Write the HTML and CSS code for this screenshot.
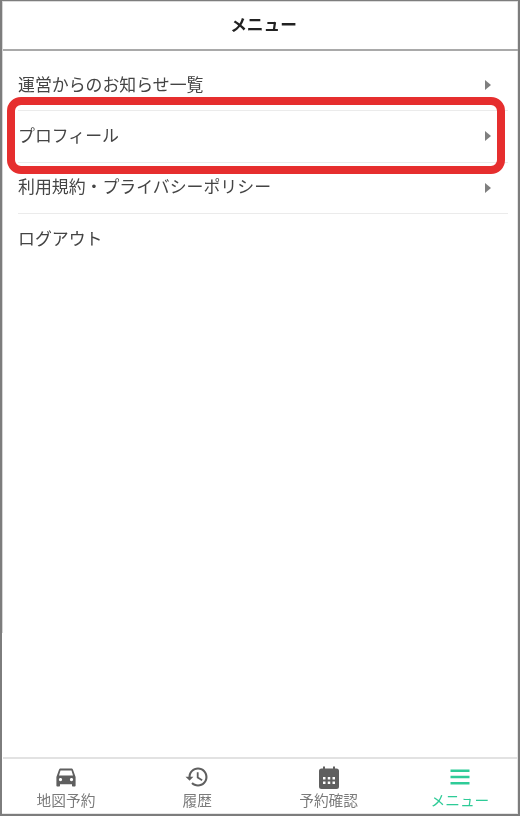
FILE: index.html
```html
<!DOCTYPE html>
<html lang="ja">
<head>
<meta charset="utf-8">
<title>メニュー</title>
<link rel="stylesheet" href="styles.css">
</head>
<body>
<div class="frame">
  <header class="header">メニュー</header>
  <main class="main">
    <ul class="list">
      <li class="row"><span>運営からのお知らせ一覧</span><i class="arrow"></i></li>
      <li class="row"><span>プロフィール</span><i class="arrow"></i></li>
      <li class="row"><span>利用規約・プライバシーポリシー</span><i class="arrow"></i></li>
      <li class="row row-last"><span>ログアウト</span></li>
    </ul>
    <div class="highlight"></div>
  </main>
  <nav class="tabs">
    <div class="tab">
      <svg class="icon" viewBox="0 0 24 24"><path d="M18.920 4.500C18.700 3.850 18.100 3.400 17.400 3.400H6.600c-.7 0-1.300.45-1.520 1.100L2.400 12v8.500c0 .6.500 1 1 1h1.600c.6 0 1-.4 1-1v-1.300h12v1.300c0 .6.400 1 1 1h1.600c.5 0 1-.4 1-1V12L18.920 4.500zM6.500 16.200c-.9 0-1.600-.7-1.600-1.600s.7-1.600 1.600-1.600 1.600.7 1.600 1.600-.7 1.600-1.600 1.600zm11 0c-.9 0-1.600-.7-1.600-1.600s.7-1.600 1.600-1.600 1.600.7 1.600 1.600-.7 1.600-1.600 1.600zM5 10.500l1.500-5h11l1.500 5H5z"/></svg>
      <span>地図予約</span>
    </div>
    <div class="tab">
      <svg class="icon" viewBox="0 0 24 24"><path d="M13 2.500c-5.100 0-9.300 4.100-9.500 9.200H.5l3.900 3.900.1.100 3.900-4H5.600C5.800 7.600 9 4.600 13 4.600c4.100 0 7.400 3.300 7.400 7.400s-3.300 7.400-7.400 7.400c-2 0-3.900-.8-5.200-2.200l-1.500 1.500c1.700 1.700 4.100 2.800 6.700 2.800 5.300 0 9.500-4.200 9.500-9.500S18.300 2.500 13 2.500zm-1.200 4.800v5.700l4.900 2.900.9-1.400-4-2.500V7.300h-1.800z"/></svg>
      <span>履歴</span>
    </div>
    <div class="tab">
      <svg class="icon" viewBox="0 0 24 24"><path fill-rule="evenodd" d="M6 1.500h2v2h8v-2h2v2h1.500A2.500 2.500 0 0 1 22 6v15.500a2.500 2.500 0 0 1-2.500 2.500h-15A2.500 2.500 0 0 1 2 21.500V6a2.500 2.500 0 0 1 2.500-2.500H6zM6 12h2.500v2.500H6zm4.750 0h2.500v2.500h-2.500zm4.750 0H18v2.500h-2.500zM6 16.500h2.500V19H6zm4.750 0h2.500V19h-2.500zm4.750 0H18V19h-2.500z"/></svg>
      <span>予約確認</span>
    </div>
    <div class="tab tab-active">
      <svg class="icon" viewBox="0 0 24 24"><path d="M2.500 4.500h19v2.600h-19zM2.500 10.700h19v2.600h-19zM2.500 16.900h19v2.600h-19z"/></svg>
      <span>メニュー</span>
    </div>
  </nav>
</div>
</body>
</html>
```

FILE: styles.css
```css
* { box-sizing: border-box; }
html, body { margin: 0; padding: 0; background: #fff; }
body { width: 520px; height: 817px; overflow: hidden; font-family: "Noto Sans CJK JP", "Noto Sans", sans-serif; }
.frame {
  position: relative;
  width: 520px; height: 816px;
  display: flex; flex-direction: column;
  border: solid #7d7d7d;
  border-width: 1px 2px 2px 2px;
  padding-left: 1px;
  box-shadow: inset 0 1px 0 #dcdcdc, inset -1px 0 0 #e6e6e6, inset 0 -1px 0 #e6e6e6;
  filter: blur(0.35px);
}
.frame::before {
  content: "";
  position: absolute; left: 0; top: 0;
  width: 1px; height: 632px;
  background: #d6d6d6;
}
.header {
  height: 50px; flex: none;
  display: flex; align-items: center; justify-content: center;
  padding: 0 0 2px 6px;
  border-bottom: 2px solid #a9a9a9;
  font-size: 16.7px; font-weight: 700; color: #222;
}
.main { flex: 1; position: relative; }
.list { list-style: none; margin: 0; padding: 9px 10px 0 15px; }
.row {
  height: 51.3px;
  display: flex; align-items: center; justify-content: space-between;
  padding-right: 17px;
  border-bottom: 1.5px solid #ebebeb;
  font-size: 16.9px; color: #444;
}
.row span { position: relative; top: -2px; }
.row-last { border-bottom: 0; }
.arrow {
  width: 0; height: 0;
  border-style: solid;
  border-width: 5px 0 5px 6px;
  border-color: transparent transparent transparent #7f7f7f;
}
.highlight {
  position: absolute; left: 4px; top: 46px;
  width: 498px; height: 77px;
  border: 8px solid #e62e2e;
  border-radius: 14px;
}
.tabs {
  height: 57px; flex: none;
  display: grid; grid-template-columns: repeat(4, 126px); column-gap: 5.3px;
  border-top: 2px solid #e2e2e2;
  padding: 6px 0 0;
}
.tab {
  display: flex; flex-direction: column; align-items: center;
  font-size: 14.7px; line-height: 20px; color: #7a7a7a;
}
.icon { width: 24px; height: 24px; fill: #5f5f5f; display: block; margin-bottom: 1px; }
.tab-active { color: #2ecb97; }
.tab-active .icon { fill: #2ecb97; }
```
